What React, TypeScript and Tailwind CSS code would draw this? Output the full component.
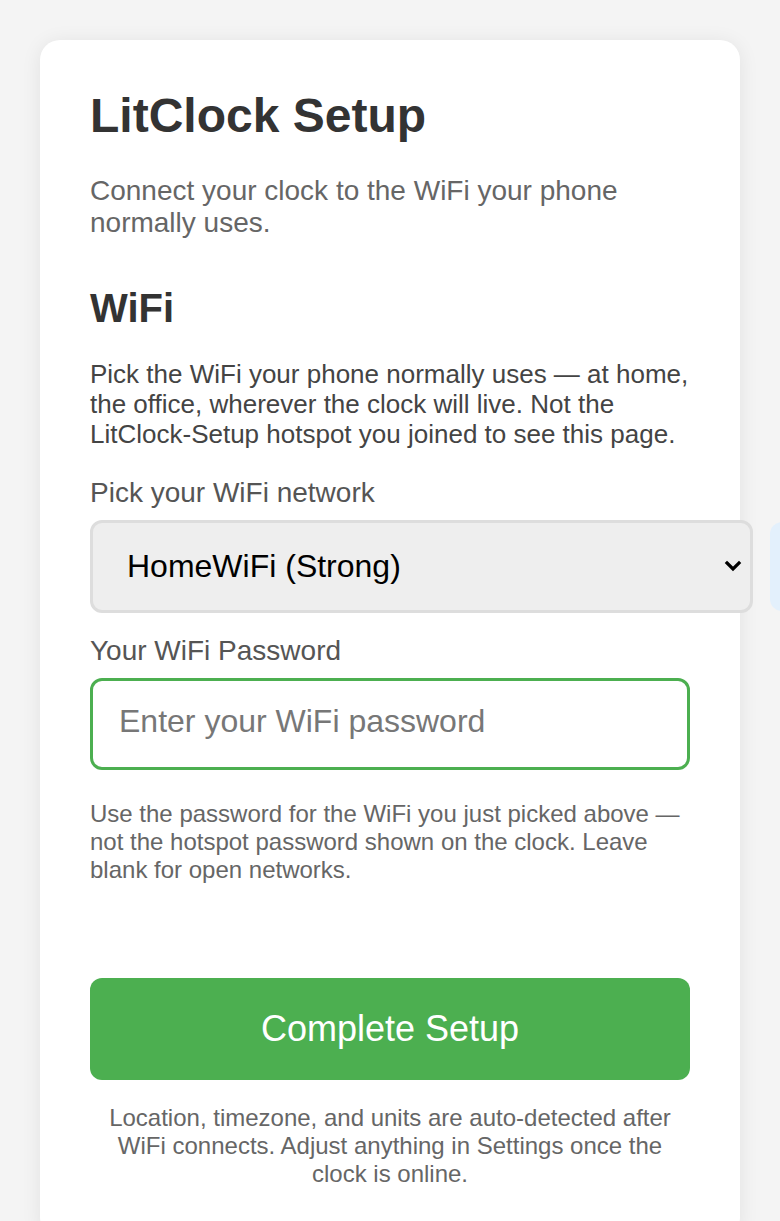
import React from 'react';

const networks = ['HomeWiFi (Strong)', 'Office-5G (Good)', 'Neighbor (Weak)'];

export default function App() {
  return (
    <div
      className="min-h-screen overflow-hidden bg-[#f4f4f4] pt-[40px] px-[40px]"
      style={{ fontFamily: '"Liberation Sans", Arial, sans-serif' }}
    >
      <div className="w-[700px] bg-white rounded-[20px] shadow-[0_2px_20px_rgba(0,0,0,0.08)] px-[50px] pt-[50px] pb-[50px]">
        <h1 className="text-[48px] leading-[52px] font-bold text-[#333]">LitClock Setup</h1>
        <p className="mt-[33px] text-[28px] leading-[32px] text-[#666]">
          Connect your clock to the WiFi your phone normally uses.
        </p>

        <h2 className="mt-[47px] text-[40px] leading-[45px] font-bold text-[#333]">WiFi</h2>
        <p className="mt-[28px] text-[26px] leading-[30px] text-[#444]">
          Pick the WiFi your phone normally uses — at home, the office, wherever the clock will
          live. Not the LitClock-Setup hotspot you joined to see this page.
        </p>

        <label className="block mt-[28px] text-[28px] leading-[32px] text-[#555]">
          Pick your WiFi network
        </label>
        <div className="mt-[11px] flex items-stretch">
          <div className="relative w-[663px] shrink-0">
            <select
              defaultValue={networks[0]}
              className="appearance-none w-full h-[93px] rounded-[12px] border-[3px] border-[#ddd] bg-[#eee] pl-[34px] pr-[60px] pb-[2px] text-[32px] text-black outline-none"
            >
              {networks.map((n) => (
                <option key={n}>{n}</option>
              ))}
            </select>
            <svg
              className="pointer-events-none absolute right-[10px] top-[36px] w-[20px] h-[20px]"
              viewBox="0 0 20 20"
              fill="none"
              stroke="#000"
              strokeWidth="3.2"
              strokeLinecap="square"
            >
              <path d="M4 7l6 6 6-6" />
            </svg>
          </div>
          <button className="ml-[17px] w-[90px] shrink-0 my-[2px] rounded-[12px] bg-[#e3f0fc]" />
        </div>

        <label className="block mt-[22px] text-[28px] leading-[32px] text-[#555]">
          Your WiFi Password
        </label>
        <input
          type="password"
          placeholder="Enter your WiFi password"
          className="mt-[11px] block w-full h-[92px] rounded-[12px] border-[3px] border-[#4caf50] px-[26px] pb-[6px] text-[32px] text-[#333] placeholder:text-[#777] outline-none"
        />
        <p className="mt-[30px] text-[24px] leading-[28px] text-[#666]">
          Use the password for the WiFi you just picked above — not the hotspot password shown on
          the clock. Leave blank for open networks.
        </p>

        <button className="mt-[94px] w-full h-[102px] rounded-[12px] bg-[#4caf50] text-white text-[36px]">
          Complete Setup
        </button>
        <p className="mt-[24px] px-[18px] text-center text-[24px] leading-[28px] text-[#666]">
          Location, timezone, and units are auto-detected after WiFi connects. Adjust anything in
          Settings once the clock is online.
        </p>
      </div>
    </div>
  );
}
